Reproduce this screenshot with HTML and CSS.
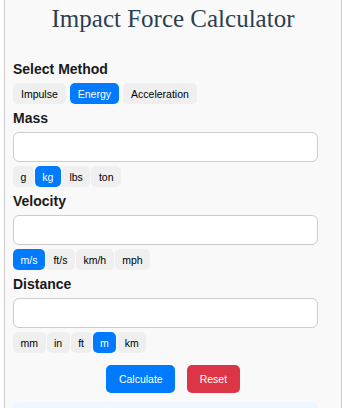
FILE: index.html
```html
<!DOCTYPE html>
<html>
<head>
  <meta charset="UTF-8">
  <link rel="stylesheet" href="styles.css">
</head>
<body>
  <div class="calculator">
    <h1 class="calc-title">Impact Force Calculator</h1>

    <div class="field">
      <div class="field-label">Select Method</div>
      <div class="method-group">
        <button class="opt">Impulse</button>
        <button class="opt active">Energy</button>
        <button class="opt">Acceleration</button>
      </div>
    </div>

    <div class="field">
      <div class="field-label">Mass</div>
      <input type="text" class="value-input">
      <div class="unit-group">
        <button class="opt">g</button>
        <button class="opt active">kg</button>
        <button class="opt">lbs</button>
        <button class="opt">ton</button>
      </div>
    </div>

    <div class="field">
      <div class="field-label">Velocity</div>
      <input type="text" class="value-input">
      <div class="unit-group">
        <button class="opt active">m/s</button>
        <button class="opt">ft/s</button>
        <button class="opt">km/h</button>
        <button class="opt">mph</button>
      </div>
    </div>

    <div class="field">
      <div class="field-label">Distance</div>
      <input type="text" class="value-input">
      <div class="unit-group">
        <button class="opt">mm</button>
        <button class="opt">in</button>
        <button class="opt">ft</button>
        <button class="opt active">m</button>
        <button class="opt">km</button>
      </div>
    </div>

    <div class="actions">
      <button class="action-btn calc">Calculate</button>
      <button class="action-btn reset">Reset</button>
    </div>

    <div class="result"></div>
  </div>
</body>
</html>
```

FILE: styles.css
```css
body {
  margin: 0;
  background-color: #fff;
  font-family: "Liberation Sans", Arial, sans-serif;
}

.calculator {
  margin: 0 5px 0 4px;
  padding: 5px 8px 0 8px;
  background-color: #f9f9f9;
  border: 1px solid #ccc;
  border-top: none;
  border-bottom: none;
}
.calc-title {
  margin: 0 0 28px 0;
  font-family: "Liberation Serif", "Times New Roman", serif;
  font-size: 25px;
  font-weight: normal;
  line-height: 28px;
  color: #2c3e50;
  text-align: center;
}

.field {
  margin-bottom: 6px;
}
.field-label {
  font-size: 14px;
  font-weight: bold;
  line-height: 16px;
  color: #1a1a1a;
  margin-bottom: 6px;
}
.value-input {
  display: block;
  width: 305px;
  height: 30px;
  margin: 0 0 4px 0;
  border: 1px solid #ccc;
  border-radius: 6px;
  background-color: #fff;
  box-sizing: border-box;
}

.method-group {
  display: flex;
  gap: 4px;
}
.unit-group {
  display: flex;
  gap: 1px;
}
.opt {
  padding: 4.5px 8px;
  font-family: "Liberation Sans", Arial, sans-serif;
  font-size: 10.5px;
  line-height: 12px;
  color: #000;
  background-color: #efefef;
  border: none;
  border-radius: 5px;
  cursor: pointer;
}
.unit-group .opt {
  padding: 4.5px 7.5px;
}
.opt.active {
  background-color: #007bff;
  color: #fff;
}

.actions {
  display: flex;
  justify-content: center;
  gap: 12px;
  margin-top: 12px;
}
.action-btn {
  padding: 8px 12.5px;
  font-family: "Liberation Sans", Arial, sans-serif;
  font-size: 10.5px;
  line-height: 12px;
  color: #fff;
  border: none;
  border-radius: 5px;
  cursor: pointer;
}
.action-btn.calc {
  background-color: #007bff;
}
.action-btn.reset {
  background-color: #dc3545;
}

.result {
  margin-top: 9px;
  width: 305px;
  height: 6px;
  background-color: #eef6ff;
  border-radius: 6px 6px 0 0;
}
```
